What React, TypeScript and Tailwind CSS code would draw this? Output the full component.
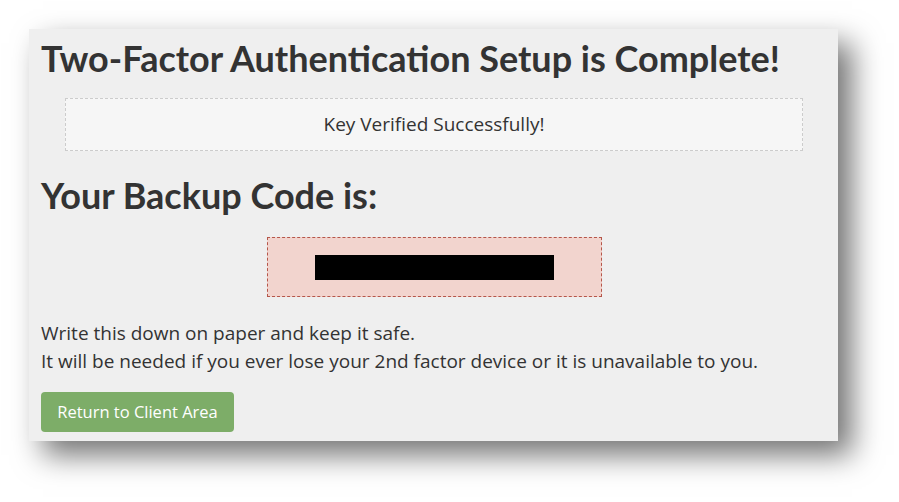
export default function App() {
  return (
    <div className="h-[502px] w-[899px] bg-white pl-[29px] pt-[29px]">
      <div className="h-[412px] w-[809px] bg-[#efefef] pl-3 pr-[34px] pt-[7px] shadow-[14px_14px_28px_rgba(0,0,0,0.55)]">
        <h1 className="font-['Lato',sans-serif] text-[36px] font-bold leading-[44px] text-[#333]">
          Two-Factor Authentication Setup is Complete!
        </h1>
        <div className="ml-6 mt-[18px] flex h-[53px] w-[738px] items-center justify-center border border-dashed border-[#cccccc] bg-[#f6f6f6] font-['Open_Sans',sans-serif] text-[19px] text-[#333]">
          Key Verified Successfully!
        </div>
        <h2 className="mt-[22px] font-['Lato',sans-serif] text-[36px] font-bold leading-[44px] text-[#333]">
          Your Backup Code is:
        </h2>
        <div className="mt-[20px] flex justify-center pl-[23px]">
          <div className="flex h-[60px] w-[335px] items-center justify-center border border-dashed border-[#b5564a] bg-[#f2d4ce]">
            <div className="h-[25px] w-[239px] bg-black" />
          </div>
        </div>
        <p className="mt-[22px] font-['Open_Sans',sans-serif] text-[19px] leading-[28px] text-[#333]">
          Write this down on paper and keep it safe.
          <br />
          It will be needed if you ever lose your 2nd factor device or it is unavailable to you.
        </p>
        <button className="mt-[17px] h-[40px] w-[193px] rounded-[4px] bg-[#7dad68] font-['Open_Sans',sans-serif] text-[16.5px] text-white">
          Return to Client Area
        </button>
      </div>
    </div>
  );
}
